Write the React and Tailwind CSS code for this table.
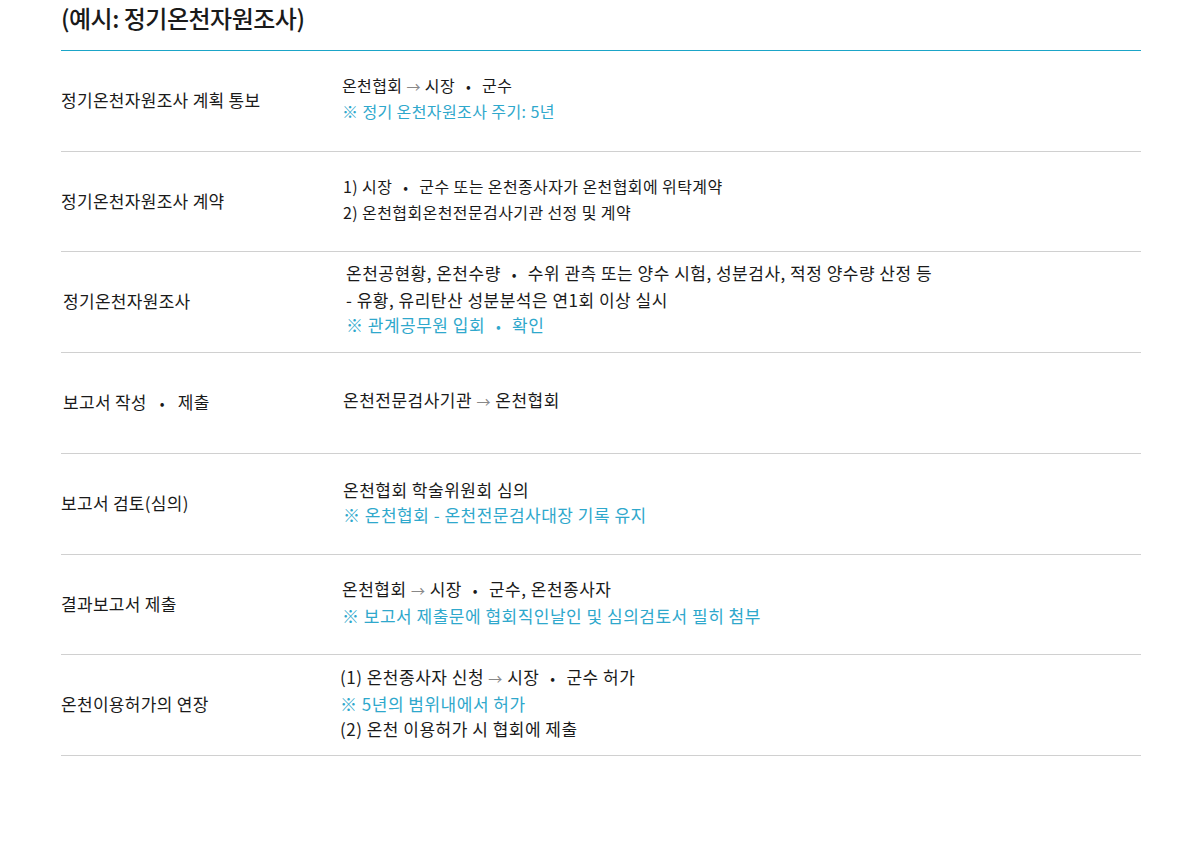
const rows = [
  {
    title: ['정기온천자원조사 계획 통보'],
    rowCls: 'h-[101px]',
    titleCls: '',
    bodyCls: 'pl-[281px] text-[16px] tracking-[0.4px]',
    lines: [
      { t: ['온천협회 ', 'arrow', ' 시장', 'dot', '군수'] },
      { t: ['※ 정기 온천자원조사 주기: 5년'], note: true },
    ],
  },
  {
    title: ['정기온천자원조사 계약'],
    rowCls: 'h-[100px]',
    titleCls: '',
    bodyCls: 'pl-[282px] text-[16px] tracking-[0.4px]',
    lines: [
      { t: ['1) 시장', 'dot', '군수 또는 온천종사자가 온천협회에 위탁계약'] },
      { t: ['2) 온천협회온천전문검사기관 선정 및 계약'] },
    ],
  },
  {
    title: ['정기온천자원조사'],
    rowCls: 'h-[101px]',
    titleCls: 'pl-[2px]',
    bodyCls: 'pl-[285px] text-[17px] tracking-[0.5px]',
    lines: [
      { t: ['온천공현황, 온천수량', 'dot', '수위 관측 또는 양수 시험, 성분검사, 적정 양수량 산정 등'] },
      { t: ['- 유황, 유리탄산 성분분석은 연1회 이상 실시'] },
      { t: ['※ 관계공무원 입회', 'dot', '확인'], note: true },
    ],
  },
  {
    title: ['보고서 작성', 'dotWide', '제출'],
    rowCls: 'h-[101px]',
    titleCls: 'pl-[2px]',
    bodyCls: 'pl-[282px] text-[17px] tracking-[0.5px]',
    lines: [{ t: ['온천전문검사기관 ', 'arrow', ' 온천협회'] }],
  },
  {
    title: ['보고서 검토(심의)'],
    rowCls: 'h-[101px]',
    titleCls: '',
    bodyCls: 'pl-[282px] text-[17px] tracking-[0.5px]',
    lines: [
      { t: ['온천협회 학술위원회 심의'] },
      { t: ['※ 온천협회 - 온천전문검사대장 기록 유지'], note: true },
    ],
  },
  {
    title: ['결과보고서 제출'],
    rowCls: 'h-[100px]',
    titleCls: '',
    bodyCls: 'pl-[281px] text-[17px] tracking-[0.5px]',
    lines: [
      { t: ['온천협회 ', 'arrow', ' 시장', 'dot', '군수, 온천종사자'] },
      { t: ['※ 보고서 제출문에 협회직인날인 및 심의검토서 필히 첨부'], note: true },
    ],
  },
  {
    title: ['온천이용허가의 연장'],
    rowCls: 'h-[101px]',
    titleCls: '',
    bodyCls: 'pl-[279px] text-[17px] tracking-[0.5px]',
    lines: [
      { t: ['(1) 온천종사자 신청 ', 'arrow', ' 시장', 'dot', '군수 허가'] },
      { t: ['※ 5년의 범위내에서 허가'], note: true },
      { t: ['(2) 온천 이용허가 시 협회에 제출'] },
    ],
  },
]

function Parts({ parts }) {
  return parts.map((p, i) => {
    if (p === 'arrow') {
      return (
        <span key={i} className="text-[#888] text-[14px]">→</span>
      )
    }
    if (p === 'dot') {
      return (
        <span key={i} className="inline-block w-[27px] text-center text-[14px]">•</span>
      )
    }
    if (p === 'dotWide') {
      return (
        <span key={i} className="inline-block w-[31px] text-center text-[14px]">•</span>
      )
    }
    return <span key={i}>{p}</span>
  })
}

function App() {
  return (
    <div className="w-full min-h-[845px] bg-white font-['Noto_Sans_CJK_KR','Noto_Sans',sans-serif] text-[#1a1a1a]">
      <div className="w-[1080px] ml-[61px]">
        {/* Title */}
        <h2 className="text-[24px] leading-[36px] font-medium tracking-[-0.5px] pb-[14px] border-b border-[#1ba5c8]">
          (예시: 정기온천자원조사)
        </h2>

        {rows.map((row, idx) => (
          <div key={idx} className={`relative flex items-center border-b border-[#d0d0d0] ${row.rowCls}`}>
            <div className={`absolute left-0 top-1/2 -translate-y-1/2 -mt-[1px] text-[17px] tracking-[0.3px] ${row.titleCls}`}>
              <Parts parts={row.title} />
            </div>
            <div className={`leading-[25px] pb-[5px] ${row.bodyCls}`}>
              {row.lines.map((l, i) => (
                <p key={i} className={l.note ? 'text-[#2fa8cc]' : ''}>
                  <Parts parts={l.t} />
                </p>
              ))}
            </div>
          </div>
        ))}
      </div>
    </div>
  )
}

export default App
